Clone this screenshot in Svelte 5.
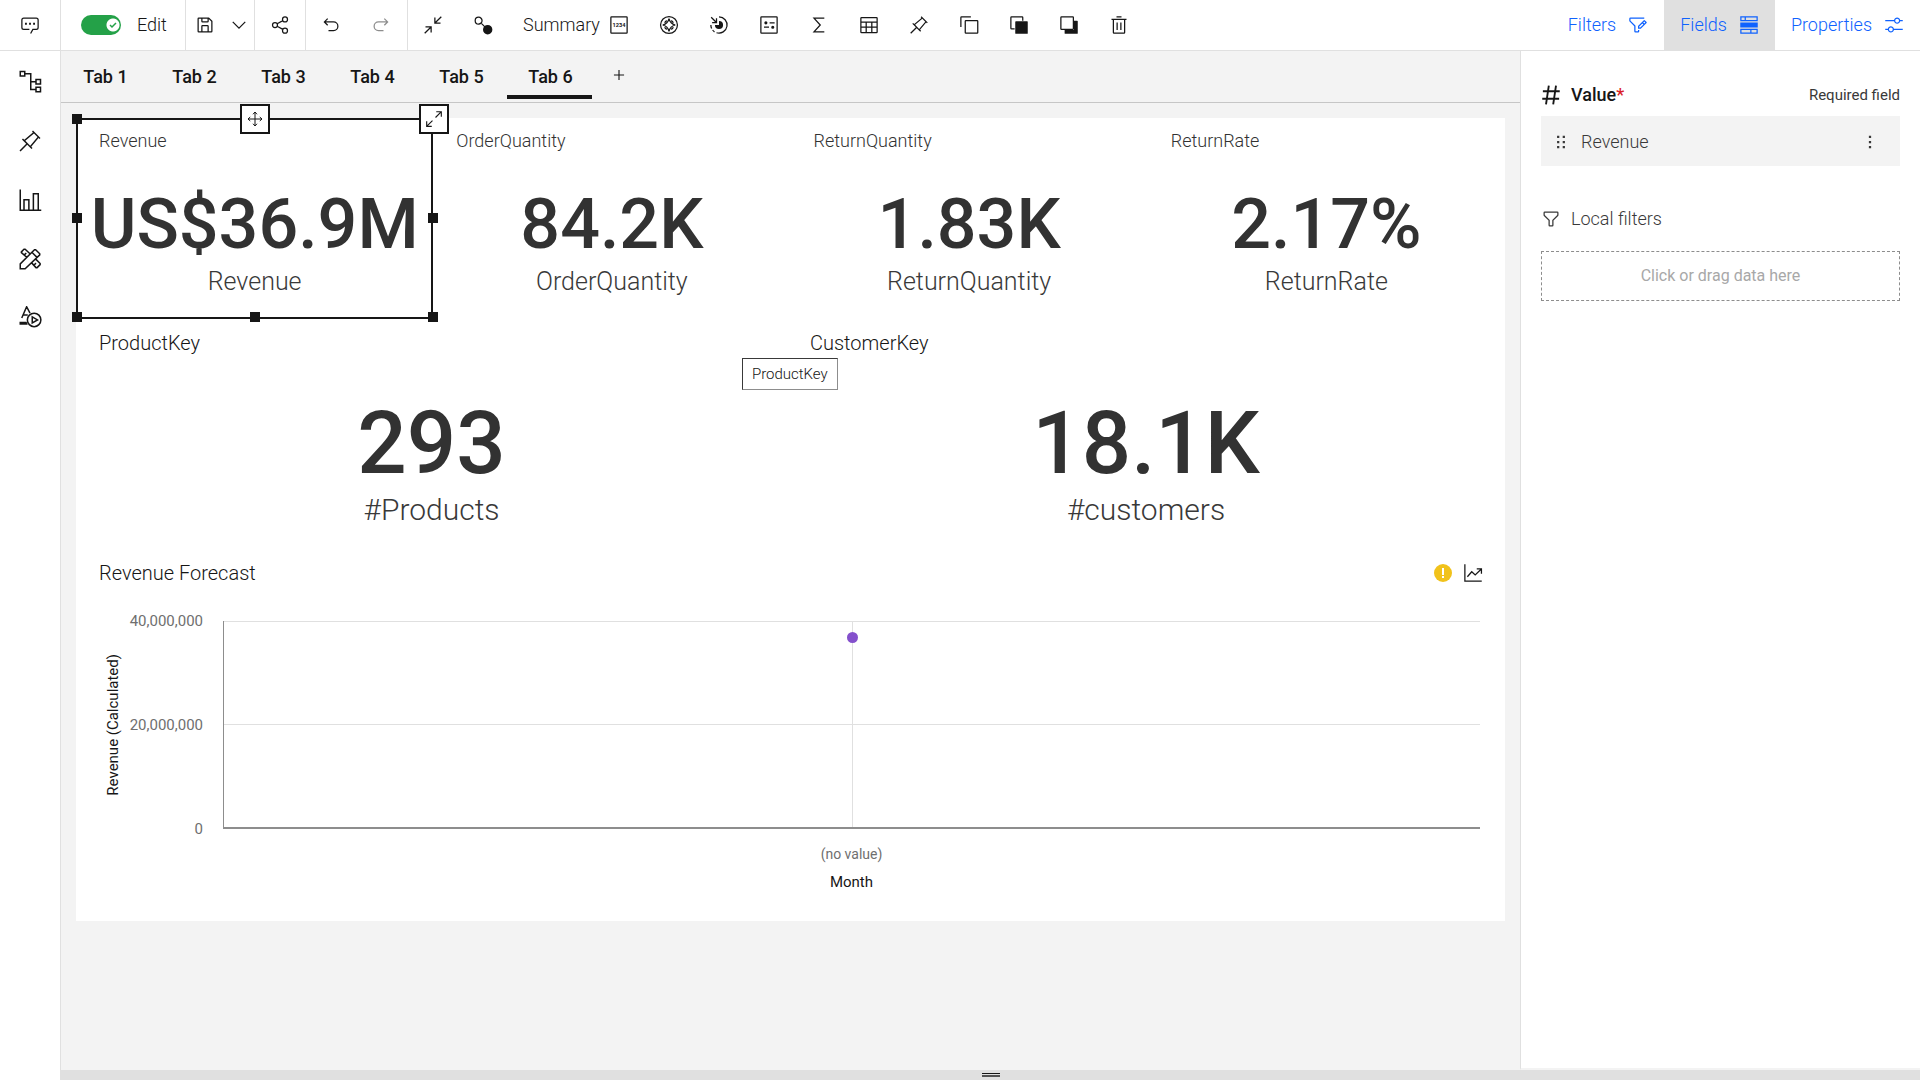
<script>
  const icons = {
    chat: {
      s: 'M17 29.5L20.6 23H26a3 3 0 0 0 3-3V8a3 3 0 0 0-3-3H6a3 3 0 0 0-3 3v12a3 3 0 0 0 3 3h9',
      f: 'M8 12.500h3v3H8zM14.500 12.500h3v3h-3zM21 12.500h3v3h-3z'
    },
    save: { f: 'M27.71 9.29l-5-5A1 1 0 0 0 22 4H6A2 2 0 0 0 4 6V26a2 2 0 0 0 2 2H26a2 2 0 0 0 2-2V10A1 1 0 0 0 27.71 9.29ZM12 6h8v4H12Zm8 20H12V18h8Zm2 0V18a2 2 0 0 0-2-2H12a2 2 0 0 0-2 2v8H6V6h4v4a2 2 0 0 0 2 2h8a2 2 0 0 0 2-2V6.410l4 4V26Z' },
    chevron: { s: 'M6 11l10 10 10-10' },
    share: { s: 'M28 7a4 4 0 1 1-8 0 4 4 0 0 1 8 0zM12 16a4 4 0 1 1-8 0 4 4 0 0 1 8 0zM28 25a4 4 0 1 1-8 0 4 4 0 0 1 8 0zM11.500 14l9-5M11.500 18l9 5' },
    undo: { f: 'M20 10H7.815l3.587-3.586L10 5 4 11l6 6 1.402-1.415L7.818 12H20a6 6 0 0 1 0 12h-8v2h8a8 8 0 0 0 0-16z' },
    redo: { f: 'M12 10h12.185l-3.587-3.586L22 5l6 6-6 6-1.402-1.415L24.182 12H12a6 6 0 0 0 0 12h8v2h-8a8 8 0 0 1 0-16z' },
    collapse: { f: 'M4 18v2h6.586L2 28.582 3.414 30 12 21.414V28h2V18zM30 3.416L28.592 2 20 10.586V4h-2v10h10v-2h-6.586z' },
    expand: { f: 'M20 2v2h6.586L18 12.582 19.414 14 28 5.414V12h2V2zM14 19.416L12.592 18 4 26.586V20H2v10h10v-2H5.414z' },
    link: { s: 'M14.500 9a5.500 5.500 0 1 1-11 0 5.500 5.500 0 0 1 11 0zM13 13l6 6', f: 'M31 23.500a7.500 7.500 0 1 1-15 0 7.500 7.500 0 0 1 15 0z' },
    digits: { s: 'M4 3h24a1 1 0 0 1 1 1v24a1 1 0 0 1-1 1H4a1 1 0 0 1-1-1V4a1 1 0 0 1 1-1z', t: '1234' },
    wheel: { s: 'M29.500 16a13.500 13.500 0 1 1-27 0 13.500 13.500 0 0 1 27 0zM16 6Q18 14 26 16 18 18 16 26 14 18 6 16 14 14 16 6zM9 12.500a9 9 0 0 1 3.500-3.500M23 12.500a9 9 0 0 0-3.500-3.500M9 19.500a9 9 0 0 0 3.500 3.500M23 19.500a9 9 0 0 1-3.500 3.500' },
    target: { s: 'M16 3a13 13 0 1 1-4 25.400M3 16a13 13 0 0 0 1.200 5.500M5.800 24a13 13 0 0 0 3 3M3.500 3.500l8 8M12 5v7H5', f: 'M16 16V9.500A6.500 6.500 0 1 1 9.500 16z' },
    kpi: { s: 'M4 3h24a1 1 0 0 1 1 1v24a1 1 0 0 1-1 1H4a1 1 0 0 1-1-1V4a1 1 0 0 1 1-1zM17 12.500h8M8 19.500h8', f: 'M13.500 12.500a2.500 2.500 0 1 1-5 0 2.500 2.500 0 0 1 5 0zM24.500 19.500a2.500 2.500 0 1 1-5 0 2.500 2.500 0 0 1 5 0z' },
    sigma: { s: 'M24.500 5H8l10 11L8 27h16.500' },
    table: { s: 'M4 4h24a1 1 0 0 1 1 1v22a1 1 0 0 1-1 1H4a1 1 0 0 1-1-1V5a1 1 0 0 1 1-1zM3 11.500h26M3 19.500h26M11.500 12v16M20.500 12v16' },
    pin: { f: 'M28.590 13.310L30 11.900 20 2l-1.310 1.420 1.180 1.180L8.380 14.320 6.660 12.610 5.250 14l5.660 5.680L2 28.580 3.410 30l8.910-8.910L18 26.750l1.390-1.420-1.710-1.710L27.400 12.130ZM16.260 22.200L9.800 15.740 21.290 6 26 10.710Z' },
    copy: { s: 'M11 9h18a1 1 0 0 1 1 1v18a1 1 0 0 1-1 1H11a1 1 0 0 1-1-1V10a1 1 0 0 1 1-1zM3 19V4a1 1 0 0 1 1-1h15' },
    front: { s: 'M9 22H4a1 1 0 0 1-1-1V4a1 1 0 0 1 1-1h17a1 1 0 0 1 1 1v5', f: 'M11 10h18a1 1 0 0 1 1 1v18a1 1 0 0 1-1 1H11a1 1 0 0 1-1-1V11a1 1 0 0 1 1-1z' },
    back: { s: 'M4 3h18a1 1 0 0 1 1 1v18a1 1 0 0 1-1 1H4a1 1 0 0 1-1-1V4a1 1 0 0 1 1-1z', f: 'M24 9h5a1 1 0 0 1 1 1v19a1 1 0 0 1-1 1H10a1 1 0 0 1-1-1v-5h15z' },
    trash: { f: 'M12 12h2v12h-2zM18 12h2v12h-2zM4 6v2h2v20a2 2 0 0 0 2 2h16a2 2 0 0 0 2-2V8h2V6zM8 28V8h16v20zM12 2h8v2h-8z' },
    filterEdit: { f: 'M26 6H4V9.170l7.410 7.420.590.580V26h4V24h2v2a2 2 0 0 1-2 2H12a2 2 0 0 1-2-2V18L2.590 10.590A2 2 0 0 1 2 9.170V6A2 2 0 0 1 4 4H26ZM29.710 11.290l-3-3a1 1 0 0 0-1.420 0L16 17.590V22h4.410l9.300-9.290A1 1 0 0 0 29.710 11.290ZM19.590 20H18V18.410l5-5L24.590 15ZM26 13.590L24.410 12 26 10.410 27.590 12Z' },
    fields: { s: 'M3 3h26v6H3zM3 23h26v6H3zM10 3v6M19 23v6', f: 'M2 12h28v8H2z' },
    adjust: { f: 'M30 8h-4.100c-.5-2.300-2.500-4-4.900-4s-4.400 1.700-4.900 4H2v2h14.100c.5 2.300 2.500 4 4.900 4s4.400-1.700 4.900-4H30V8zM21 12c-1.700 0-3-1.300-3-3s1.300-3 3-3 3 1.300 3 3S22.700 12 21 12zM2 24h4.100c.5 2.300 2.500 4 4.900 4s4.400-1.700 4.900-4H30v-2H15.900c-.5-2.300-2.500-4-4.900-4s-4.400 1.700-4.900 4H2V24zM11 20c1.700 0 3 1.300 3 3s-1.300 3-3 3-3-1.300-3-3S9.300 20 11 20z' },
    tree: { s: 'M3 2h6v6H3zM9 5h8v21h6M17 15.500h6M24 12.500h6v6h-6zM24 23h6v6h-6z' },
    bars: { s: 'M3 2v27.500h28M8 29V15.500h6.500V29M20.500 29V7.500H27V29' },
    tools: { s: 'M3 29v-6.500L22 3.500h1.500l5.500 5.500v1.500L9.500 29zM18.500 7l6.500 6.500M11.500 13.500L4.500 7.500v-1L8 3h1.500L16 9M8.500 10.500l2.500-2.500M18.500 21.500l5.500 6h1.500l4-4V22L24 16.500M21.500 24l2.500-2.500' },
    letterPlay: { s: 'M5 16l6.500-15L16 9.500M7 12h6M30.500 18.500a9 9 0 1 1-18 0 9 9 0 0 1 18 0zM19 14.500l7 4-7 4z', f: 'M2 21h9.500l1.500 4H2z' },
    move: { s: 'M16 2v28M2 16h28M12 6.500L16 2l4 4.500M12 25.500l4 4.500 4-4.500M6.500 12L2 16l4.500 4M25.500 12l4.500 4-4.500 4' },
    hash: { w: 3, s: 'M12.500 1L8 31M24 1l-4.500 30M3 10h27M2 22h27' },
    filter: { f: 'M18 28H14a2 2 0 0 1-2-2V18.410L4.590 11A2 2 0 0 1 4 9.590V6A2 2 0 0 1 6 4H26a2 2 0 0 1 2 2V9.590A2 2 0 0 1 27.410 11L20 18.410V26A2 2 0 0 1 18 28ZM6 6V9.590l8 8V26h4V17.590l8-8V6Z' },
    plus: { s: 'M16 7v18M7 16h18' },
    kebab: { f: 'M14 5h4v4h-4zM14 14h4v4h-4zM14 23h4v4h-4z' },
    drag: { f: 'M9 5h4v4H9zM19 5h4v4h-4zM9 14h4v4H9zM19 14h4v4h-4zM9 23h4v4H9zM19 23h4v4h-4z' },
    trend: { s: 'M3 2v27h27M7 22l7-8 5.500 5L29 10M22 9.500h7.500V17' }
  };

  const tools = [
    ['wheel', 'Navigate'], ['target', 'Focus'], ['kpi', 'Key metrics'],
    ['sigma', 'Calculate'], ['table', 'Table'], ['pin', 'Pin'], ['copy', 'Duplicate'],
    ['front', 'Bring to front'], ['back', 'Send to back'], ['trash', 'Delete']
  ];
  const rail = [
    ['tree', 'Data sources'], ['pin', 'Pins'], ['bars', 'Visualizations'],
    ['tools', 'Widgets'], ['letterPlay', 'Animations']
  ];
  const panels = [
    { label: 'Filters', icon: 'filterEdit' },
    { label: 'Fields', icon: 'fields' },
    { label: 'Properties', icon: 'adjust' }
  ];
  const tabs = ['Tab 1', 'Tab 2', 'Tab 3', 'Tab 4', 'Tab 5', 'Tab 6'];
  const metrics = [
    { title: 'Revenue', value: 'US$36.9M' },
    { title: 'OrderQuantity', value: '84.2K' },
    { title: 'ReturnQuantity', value: '1.83K' },
    { title: 'ReturnRate', value: '2.17%' }
  ];
  const counts = [
    { title: 'ProductKey', value: '293', label: '#Products' },
    { title: 'CustomerKey', value: '18.1K', label: '#customers' }
  ];
  const axisMax = 40000000;
  const point = 36900000;

  let activeTab = $state('Tab 6');
  let activePanel = $state('Fields');
  let editing = $state(true);
</script>

{#snippet icon(name, size = 20)}
  <svg class="icon" width={size} height={size} viewBox="0 0 32 32" aria-hidden="true">
    {#if icons[name].s}<path class="line" stroke-width={icons[name].w ?? 2} d={icons[name].s} />{/if}
    {#if icons[name].f}<path class="solid" d={icons[name].f} />{/if}
    {#if icons[name].t}<text class="tiny" x="16" y="19" text-anchor="middle">{icons[name].t}</text>{/if}
  </svg>
{/snippet}

<div class="app">
  <header class="topbar">
    <button class="corner" aria-label="Assistant">{@render icon('chat')}</button>
    <div class="group edit">
      <span class="switch">
        <input id="edit" type="checkbox" role="switch" bind:checked={editing} />
        <svg class="tick" width="8" height="8" viewBox="0 0 8 8" aria-hidden="true"><path d="M1 4l2 2 4-4" /></svg>
      </span>
      <label for="edit">Edit</label>
    </div>
    <div class="group saving">
      <button aria-label="Save">{@render icon('save')}</button>
      <button aria-label="Save options">{@render icon('chevron')}</button>
    </div>
    <div class="group sharing">
      <button aria-label="Share">{@render icon('share')}</button>
    </div>
    <div class="group history">
      <button aria-label="Undo">{@render icon('undo')}</button>
      <button aria-label="Redo" disabled>{@render icon('redo')}</button>
    </div>
    <div class="tools">
      <button class="tool" aria-label="Collapse">{@render icon('collapse')}</button>
      <button class="tool" aria-label="Link widgets">{@render icon('link')}</button>
      <button class="summary"><span>Summary</span>{@render icon('digits')}</button>
      {#each tools as [name, label]}
        <button class="tool" aria-label={label}>{@render icon(name)}</button>
      {/each}
    </div>
    <nav class="panels" aria-label="Side panels">
      {#each panels as p}
        <button class:active={activePanel === p.label} onclick={() => (activePanel = p.label)}>
          {p.label}{@render icon(p.icon)}
        </button>
      {/each}
    </nav>
  </header>

  <div class="body">
    <nav class="rail" aria-label="Content">
      {#each rail as [name, label]}
        <button aria-label={label}>{@render icon(name, 24)}</button>
      {/each}
    </nav>

    <div class="work">
      <div class="columns">
        <main class="canvas">
          <div class="tabs" role="tablist">
            {#each tabs as tab}
              <button role="tab" class="tab" aria-selected={activeTab === tab} class:current={activeTab === tab} onclick={() => (activeTab = tab)}>{tab}</button>
            {/each}
            <button class="add" aria-label="Add tab">{@render icon('plus', 18)}</button>
          </div>

          <div class="stage">
            <div class="board">
              <div class="metrics">
                {#each metrics as m, i}
                  <section class="metric" class:selected={i === 0}>
                    <h2>{m.title}</h2>
                    <p class="value">{m.value}</p>
                    <p class="label">{m.title}</p>
                    {#if i === 0}
                      <i class="handle n w"></i><i class="handle mid w"></i><i class="handle mid e"></i>
                      <i class="handle s w"></i><i class="handle s center"></i><i class="handle s e"></i>
                      <button class="grip center" aria-label="Move">{@render icon('move', 16)}</button>
                      <button class="grip e" aria-label="Expand">{@render icon('expand', 18)}</button>
                    {/if}
                  </section>
                {/each}
              </div>

              <div class="counts">
                {#each counts as c}
                  <section class="count">
                    <h2>{c.title}</h2>
                    <p class="value">{c.value}</p>
                    <p class="label">{c.label}</p>
                  </section>
                {/each}
              </div>

              <section class="forecast">
                <div class="head">
                  <h2>Revenue Forecast</h2>
                  <svg width="20" height="20" viewBox="0 0 20 20" role="img" aria-label="Warning">
                    <circle cx="10" cy="10" r="9" fill="#f1c21b" />
                    <path d="M9 5h2v7H9zM9 13h2v2H9z" fill="#fff" />
                  </svg>
                  <button aria-label="Forecast">{@render icon('trend')}</button>
                </div>
                <div class="chart">
                  <div class="ytitle"><span>Revenue (Calculated)</span></div>
                  <div class="ticks"><span>40,000,000</span><span>20,000,000</span><span>0</span></div>
                  <div class="plot">
                    <div class="band"></div>
                    <div class="band"></div>
                    <i class="category"></i>
                    <i class="dot" style="bottom: {(point / axisMax) * 100}%"></i>
                  </div>
                  <div class="xaxis"><span class="tick-label">(no value)</span><span>Month</span></div>
                </div>
              </section>

              <div class="tooltip" role="tooltip">ProductKey</div>
            </div>
          </div>
        </main>

        <aside class="fields">
          <div class="slot">
            {@render icon('hash')}
            <h3>Value<span class="star">*</span></h3>
            <span class="required">Required field</span>
          </div>
          <div class="field">
            {@render icon('drag', 18)}
            <span>Revenue</span>
            <button aria-label="Field options">{@render icon('kebab', 18)}</button>
          </div>
          <div class="slot local">
            {@render icon('filter')}
            <span>Local filters</span>
          </div>
          <button class="drop">Click or drag data here</button>
        </aside>
      </div>
      <div class="splitter"><i></i></div>
    </div>
  </div>
</div>

<style>
  :global(body) { margin: 0; }
  .app {
    display: flex;
    flex-direction: column;
    min-height: 100vh;
    font-family: Roboto, "Open Sans", sans-serif;
    font-size: 18px;
    line-height: 24px;
    font-weight: 300;
    color: #161616;
    background: #fff;
  }
  .app :is(div, section, nav, aside, header, main, button, i, input) { box-sizing: border-box; }
  button {
    display: flex;
    align-items: center;
    justify-content: center;
    padding: 0;
    border: 0;
    background: none;
    color: inherit;
    font: inherit;
    cursor: pointer;
  }
  h2, h3, p { margin: 0; font-weight: 300; }
  h2, h3 { font-size: 18px; line-height: 24px; }
  svg { display: block; flex: none; }
  .line { fill: none; stroke: currentColor; }
  .solid { fill: currentColor; }
  .tiny { font-size: 9px; font-weight: 700; fill: currentColor; }

  .topbar { display: flex; height: 51px; border-bottom: 1px solid #e0e0e0; }
  .corner { width: 61px; border-right: 1px solid #e0e0e0; }
  .group { display: flex; align-items: center; border-right: 1px solid #e0e0e0; }
  .edit { width: 125px; padding-left: 20px; gap: 16px; }
  .switch { position: relative; display: flex; }
  .switch input {
    appearance: none;
    width: 40px;
    height: 20px;
    margin: 0;
    border-radius: 10px;
    background: radial-gradient(circle at 32px 10px, #fff 6px, transparent 7px) #24a148;
  }
  .tick { position: absolute; left: 28px; top: 6px; fill: none; stroke: #24a148; stroke-width: 1.500; pointer-events: none; }
  .saving { width: 69px; padding-left: 9px; gap: 14px; }
  .sharing { width: 51px; justify-content: center; }
  .history { width: 102px; padding-left: 15px; gap: 30px; }
  .history button:disabled { color: #8d8d8d; }
  .tools { display: flex; flex: 1; }
  .tool { width: 50px; }
  .summary { width: 136px; padding: 0 15px; justify-content: space-between; }
  .panels { display: flex; color: #0f62fe; }
  .panels button { padding: 0 16px; gap: 12px; }
  .panels .active { background: #e0e0e0; }

  .body { display: flex; flex: 1; }
  .rail { width: 61px; padding-top: 1px; border-right: 1px solid #e0e0e0; }
  .rail button { width: 60px; height: 59px; }
  .work { display: flex; flex-direction: column; flex: 1; min-width: 0; }
  .columns { display: flex; flex: 1; }
  .canvas { flex: 1; min-width: 0; background: #f3f3f3; }
  .tabs { display: flex; height: 52px; border-bottom: 1px solid #c6c6c6; padding-left: 1px; gap: 4px; }
  .tab { width: 85px; height: 48px; font-weight: 500; border-bottom: 4px solid transparent; padding: 8px 0 0 2px; }
  .tab.current { border-color: #161616; }
  .add { width: 46px; height: 48px; }

  .stage { padding: 15px; }
  .board { position: relative; background: #fff; min-height: 803px; }
  .metrics { display: grid; grid-template-columns: repeat(4, 1fr); }
  .metric { position: relative; height: 201px; padding-top: 11px; }
  .metric h2, .count h2 { padding-left: 23px; }
  .value { font-weight: 500; color: #323232; text-align: center; }
  .label { color: #393939; text-align: center; }
  .metric h2 { color: #323232; }
  .metric .value { margin-top: 29px; font-size: 70px; line-height: 84px; }
  .metric .label { font-size: 25px; line-height: 32px; }
  .selected::before {
    content: "";
    position: absolute;
    inset: 0;
    border: 2px solid #161616;
    pointer-events: none;
  }
  .handle { position: absolute; width: 10px; height: 10px; background: #161616; }
  .n { top: -4px; }
  .s { bottom: -3px; }
  .mid { top: calc(50% - 6px); }
  .w { left: -4px; }
  .handle.e { right: -5px; }
  .handle.center { left: calc(50% - 5px); }
  .grip { position: absolute; top: -14px; width: 30px; height: 30px; border: 2px solid #161616; background: #fff; }
  .grip.center { left: calc(50% - 15px); }
  .grip.e { right: -16px; }

  .counts { display: grid; grid-template-columns: 711fr 718fr; }
  .count { padding: 12px 0 19px; }
  .count h2, .forecast h2 { font-size: 20px; }
  .count .value { margin-top: 40px; font-size: 87px; line-height: 96px; }
  .count .label { margin-top: -1px; font-size: 30px; line-height: 40px; }

  .forecast { padding: 12px 22px 0 23px; }
  .head { display: flex; align-items: center; gap: 10px; }
  .head h2 { flex: 1; }
  .chart {
    display: grid;
    grid-template: 208px auto / 28px 96px 1fr;
    margin-top: 36px;
    padding-right: 3px;
    font-size: 15px;
    line-height: 20px;
  }
  .ytitle { display: flex; align-items: center; justify-content: center; font-weight: 400; font-size: 15px; }
  .ytitle span { writing-mode: vertical-rl; transform: rotate(180deg); white-space: nowrap; }
  .ticks { display: flex; flex-direction: column; justify-content: space-between; margin: -10px 20px -10px -10px; text-align: right; color: #6f6f6f; font-weight: 400; }
  .plot { position: relative; display: flex; flex-direction: column; border-left: 1px solid #8d8d8d; border-bottom: 2px solid #8d8d8d; }
  .band { flex: 1; border-top: 1px solid #e0e0e0; }
  .category { position: absolute; left: 50%; top: 0; bottom: 0; width: 1px; background: #e0e0e0; }
  .dot { position: absolute; left: 50%; width: 11px; height: 11px; margin: 0 0 -6px -5px; border-radius: 50%; background: #8450cc; }
  .xaxis { grid-column: 3; display: flex; flex-direction: column; align-items: center; gap: 8px; padding-top: 15px; font-weight: 400; }
  .tick-label { font-size: 14px; color: #6f6f6f; }
  .tooltip {
    position: absolute;
    left: 46.6%;
    top: 240px;
    padding: 5px 9px;
    border: 1px solid #393939;
    border-right-color: #8d8d8d;
    border-bottom-color: #8d8d8d;
    background: #fff;
    color: #161616;
    font-size: 15px;
    line-height: 20px;
  }

  .fields { width: 400px; padding: 32px 20px 0; border-left: 1px solid #e0e0e0; border-bottom: 2px solid #f3f3f3; background: #fff; }
  .slot { display: flex; align-items: center; gap: 10px; }
  .slot h3 { flex: 1; font-weight: 500; }
  .star { color: #da1e28; }
  .required { font-size: 15px; font-weight: 400; color: #393939; }
  .field { display: flex; align-items: center; gap: 11px; height: 50px; margin-top: 9px; padding: 1px 21px 0 11px; background: #f3f3f3; color: #393939; }
  .field span { flex: 1; }
  .local { margin-top: 41px; color: #393939; }
  .drop { width: 100%; height: 50px; margin-top: 20px; border: 1px dashed #8d8d8d; color: #a8a8a8; font-size: 16px; font-weight: 400; }
  .splitter { display: flex; justify-content: center; align-items: center; height: 10px; background: #e0e0e0; }
  .splitter i { width: 18px; height: 4px; border-top: 1px solid #161616; border-bottom: 2px solid #525252; }
</style>
